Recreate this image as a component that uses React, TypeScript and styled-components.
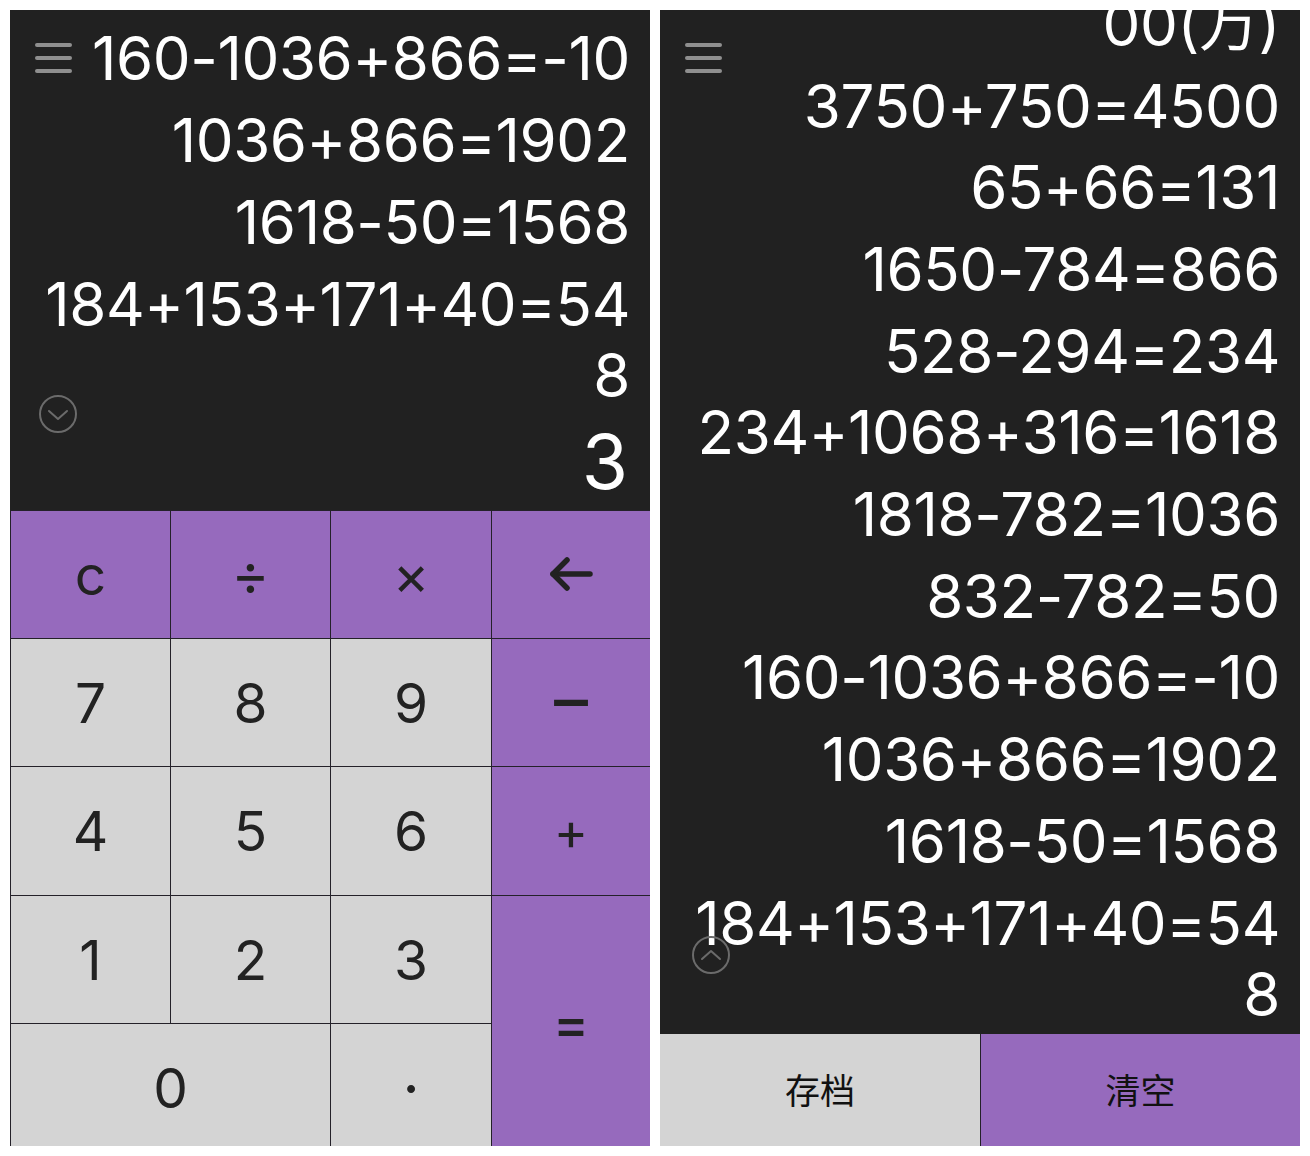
import React from 'react'
import styled, { createGlobalStyle } from 'styled-components'

const GlobalStyle = createGlobalStyle`
  html, body { margin: 0; padding: 0; background: #ffffff; }
  body { font-family: Inter, "Noto Sans CJK SC", sans-serif; }
`

const Page = styled.div`
  display: flex;
  gap: 10px;
  width: 1290px;
  height: 1136px;
  padding: 10px;
`

const Panel = styled.section`
  position: relative;
  display: flex;
  flex-direction: column;
  width: 640px;
  height: 1136px;
  overflow: hidden;
`

const Display = styled.div<{ $bottom: number }>`
  flex: 1;
  min-height: 0;
  display: flex;
  flex-direction: column;
  justify-content: flex-end;
  overflow: hidden;
  background: #212121;
  color: #ffffff;
  padding: 0 20px ${(props) => props.$bottom}px;
  text-align: right;
  font-weight: 400;
`

const HistoryLine = styled.div`
  flex-shrink: 0;
  font-size: 60px;
  line-height: 71px;
  letter-spacing: -0.4px;
  margin-top: 10.7px;
  word-break: break-all;
`

const Result = styled.div`
  flex-shrink: 0;
  font-size: 75px;
  line-height: 90px;
  margin: 6.5px 2px 0 0;
`

const MenuButton = styled.div`
  position: absolute;
  top: 33px;
  left: 25px;
  display: flex;
  flex-direction: column;
  gap: 9px;
  width: 37px;
`

const MenuBar = styled.span`
  height: 4px;
  border-radius: 2px;
  background: #8f8f8f;
`

const FoldButton = styled.div<{ $top: number; $left: number }>`
  position: absolute;
  top: ${(props) => props.$top}px;
  left: ${(props) => props.$left}px;
  width: 38px;
  height: 38px;
  color: #6b6b6b;
`

const Keypad = styled.div`
  display: grid;
  flex-shrink: 0;
  height: 636px;
  grid-template-columns: 160px 160px 161px 159px;
  grid-template-rows: 128px 128px 129px 128px 128px;
`

const Key = styled.div<{ $accent?: boolean; $wide?: boolean; $tall?: boolean; $size?: number; $weight?: number; $lift?: number }>`
  display: flex;
  align-items: center;
  justify-content: center;
  box-sizing: border-box;
  grid-column: ${(props) => (props.$wide ? 'span 2' : 'auto')};
  grid-row: ${(props) => (props.$tall ? 'span 2' : 'auto')};
  padding-bottom: ${(props) => props.$lift ?? 0}px;
  border-left: 1px solid #242129;
  border-top: 1px solid #242129;
  background: ${(props) => (props.$accent ? '#966abd' : '#d4d4d4')};
  color: #222222;
  font-size: ${(props) => props.$size ?? 55}px;
  font-weight: ${(props) => props.$weight ?? 400};
`

const ActionRow = styled.div`
  display: grid;
  flex-shrink: 0;
  grid-template-columns: 320px 320px;
  height: 112px;
`

const ActionButton = styled.div<{ $accent?: boolean }>`
  display: flex;
  align-items: center;
  justify-content: center;
  box-sizing: border-box;
  padding-bottom: 4px;
  background: ${(props) => (props.$accent ? '#966abd' : '#d4d4d4')};
  border-left: ${(props) => (props.$accent ? '1px solid #242129' : 'none')};
  color: #111111;
  font-family: "Noto Sans CJK SC", sans-serif;
  font-size: 35px;
  font-weight: 400;
`

const MenuIcon = () => (
  <MenuButton>
    <MenuBar />
    <MenuBar />
    <MenuBar />
  </MenuButton>
)

const FoldIcon = ({ top, left, up }: { top: number; left: number; up?: boolean }) => (
  <FoldButton $top={top} $left={left}>
    <svg width="38" height="38" viewBox="0 0 38 38" fill="none" stroke="currentColor" strokeWidth="2" strokeLinecap="round" strokeLinejoin="round">
      <circle cx="19" cy="19" r="18" />
      <path d={up ? 'M10 23 L19 15 L28 23' : 'M10 16 L19 24 L28 16'} />
    </svg>
  </FoldButton>
)

const BackArrow = () => (
  <svg width="44" height="36" viewBox="0 0 44 36" fill="none" stroke="#222222" strokeWidth="5.5" strokeLinecap="round" strokeLinejoin="round">
    <path d="M4 17 H41" />
    <path d="M18 3 L4 17 L18 31" />
  </svg>
)

const leftHistory = ['160-1036+866=-10', '1036+866=1902', '1618-50=1568', '184+153+171+40=548']
const rightHistory = [
  '00(万)',
  '3750+750=4500',
  '65+66=131',
  '1650-784=866',
  '528-294=234',
  '234+1068+316=1618',
  '1818-782=1036',
  '832-782=50',
  '160-1036+866=-10',
  '1036+866=1902',
  '1618-50=1568',
  '184+153+171+40=548',
]

export default function App() {
  return (
    <>
      <GlobalStyle />
      <Page>
        <Panel>
          <Display $bottom={3}>
            {leftHistory.map((line) => (
              <HistoryLine key={line}>{line}</HistoryLine>
            ))}
            <Result>3</Result>
          </Display>
          <MenuIcon />
          <FoldIcon top={385} left={29} />
          <Keypad>
            <Key $accent>c</Key>
            <Key $accent $size={58} $lift={2}>÷</Key>
            <Key $accent $size={56}>×</Key>
            <Key $accent><BackArrow /></Key>
            <Key>7</Key>
            <Key>8</Key>
            <Key>9</Key>
            <Key $accent $size={74} $lift={12}>−</Key>
            <Key>4</Key>
            <Key>5</Key>
            <Key>6</Key>
            <Key $accent $size={52}>+</Key>
            <Key>1</Key>
            <Key>2</Key>
            <Key>3</Key>
            <Key $accent $tall $size={54} $weight={500}>=</Key>
            <Key $wide>0</Key>
            <Key $weight={500}>·</Key>
          </Keypad>
        </Panel>
        <Panel>
          <Display $bottom={4.5}>
            {rightHistory.map((line) => (
              <HistoryLine key={line}>{line}</HistoryLine>
            ))}
          </Display>
          <MenuIcon />
          <FoldIcon top={926} left={32} up />
          <ActionRow>
            <ActionButton>存档</ActionButton>
            <ActionButton $accent>清空</ActionButton>
          </ActionRow>
        </Panel>
      </Page>
    </>
  )
}
